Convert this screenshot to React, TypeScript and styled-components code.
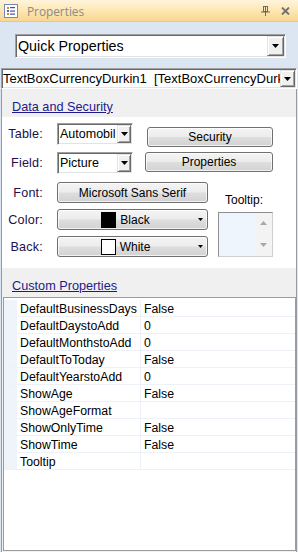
import React from "react";
import styled, { createGlobalStyle } from "styled-components";

const Global = createGlobalStyle`
  html, body { margin: 0; padding: 0; }
  body {
    width: 298px; height: 552px; overflow: hidden;
    font-family: "Liberation Sans", Arial, sans-serif;
    -webkit-font-smoothing: none;
  }
  * { box-sizing: border-box; }
`;

const Window = styled.div`
  width: 298px;
  height: 552px;
  display: flex;
  flex-direction: column;
  background: #dce6f2;
`;

const TitleBar = styled.div`
  height: 22px;
  flex: none;
  display: flex;
  align-items: center;
  padding: 0 8px 0 4px;
  background: linear-gradient(#fff4dc 0%, #fde8b6 45%, #f9d690 100%);
  border-bottom: 1px solid #f1c66f;
`;

const TitleText = styled.span`
  margin-left: 9px;
  font-family: "Open Sans", "Liberation Sans", sans-serif;
  font-size: 11.8px;
  color: #8b8b8b;
  line-height: 14px;
`;

const TitleTools = styled.div`
  margin-left: auto;
  display: flex;
  align-items: center;
  gap: 11px;
`;

const QuickArea = styled.div`
  height: 46px;
  flex: none;
  padding: 12px 0 0 15px;
`;

const SunkenCombo = styled.div<{ $w: string; $h: number; $fs: number }>`
  width: ${(p) => p.$w};
  height: ${(p) => p.$h}px;
  display: flex;
  align-items: stretch;
  background: #fff;
  border: 1px solid;
  border-color: #a0a0a0 #ffffff #ffffff #a0a0a0;
  box-shadow: inset 1px 1px #696969, inset -1px -1px #e3e3e3;
  padding: 1px;
  font-size: ${(p) => p.$fs}px;
  color: #000;
`;

const ComboText = styled.span<{ $pad: number }>`
  flex: 1;
  min-width: 0;
  overflow: hidden;
  white-space: pre;
  display: flex;
  align-items: center;
  padding-left: ${(p) => p.$pad}px;
`;

const DropButton = styled.span<{ $w: number }>`
  flex: none;
  width: ${(p) => p.$w}px;
  display: flex;
  align-items: center;
  justify-content: center;
  background: #f0f0f0;
  border: 1px solid;
  border-color: #e3e3e3 #696969 #696969 #e3e3e3;
  box-shadow: inset 1px 1px #ffffff, inset -1px -1px #a0a0a0;
`;

const ObjectBar = styled.div`
  flex: none;
  height: 21px;
  margin: 0 1px;
  display: flex;
`;

const Panel = styled.div`
  flex: 1;
  margin: 0 1px;
  display: flex;
  flex-direction: column;
  background: #f0f0f0;
  border-left: 1px solid #9a9a9a;
  border-right: 1px solid #9a9a9a;
`;

const SectionHeader = styled.div<{ $h: number }>`
  flex: none;
  height: ${(p) => p.$h}px;
  padding: 8px 0 0 10px;
`;

const HeaderLink = styled.span`
  font-size: 12.7px;
  line-height: 16px;
  color: #1d1a8c;
  text-decoration: underline;
`;

const DataBody = styled.div`
  flex: none;
  height: 151px;
  background: #fff;
  padding: 0 23px 11px 0;
  display: flex;
  flex-direction: column;
`;

const TopBlock = styled.div`
  display: flex;
  justify-content: space-between;
  align-items: flex-start;
`;

const FieldCol = styled.div<{ $top: number; $gap: number }>`
  display: flex;
  flex-direction: column;
  padding-top: ${(p) => p.$top}px;
  gap: ${(p) => p.$gap}px;
`;

const FieldRow = styled.div<{ $h: number }>`
  height: ${(p) => p.$h}px;
  display: flex;
  align-items: center;
`;

const Label = styled.span`
  width: 41px;
  margin-right: 14px;
  text-align: right;
  font-size: 12.6px;
  color: #22104a;
  letter-spacing: 0.2px;
`;

const ActionCol = styled.div`
  display: flex;
  flex-direction: column;
  align-items: flex-end;
  padding-top: 10px;
  gap: 5px;
`;

const PushButton = styled.div<{ $w: number; $h: number }>`
  width: ${(p) => p.$w}px;
  height: ${(p) => p.$h}px;
  display: flex;
  align-items: center;
  border: 1px solid #707070;
  border-radius: 3px;
  background: linear-gradient(#f4f4f4 0%, #ececec 48%, #dedede 52%, #d2d2d2 100%);
  box-shadow: inset 0 0 0 1px rgba(255, 255, 255, 0.7);
  font-size: 12px;
  color: #000;
`;

const ButtonLabel = styled.span`
  flex: 1;
  display: flex;
  align-items: center;
  justify-content: center;
  gap: 4px;
  line-height: 14px;
`;

const ArrowSlot = styled.span`
  flex: none;
  width: 14px;
  display: flex;
  align-items: center;
  justify-content: center;
`;

const Swatch = styled.span<{ $c: string }>`
  width: 15px;
  height: 16px;
  background: ${(p) => p.$c};
  border: 1px solid #000;
`;

const BottomBlock = styled.div`
  display: flex;
  align-items: flex-start;
  padding-top: 8px;
`;

const TooltipCol = styled.div`
  margin-left: 10px;
  width: 59px;
  padding-top: 11px;
  display: flex;
  flex-direction: column;
`;

const TooltipLabel = styled.span`
  padding-left: 7px;
  margin-bottom: 5px;
  font-size: 12px;
  line-height: 14px;
  color: #000;
`;

const TooltipBox = styled.div`
  height: 45px;
  display: flex;
  background: #eef5fd;
  border: 1px solid;
  border-color: #8e8f8f #cfcfcf #cfcfcf #8e8f8f;
`;

const TooltipArea = styled.div`
  flex: 1;
`;

const ScrollTrack = styled.div`
  width: 17px;
  background: #f3f3f3;
  display: flex;
  flex-direction: column;
  justify-content: space-between;
  align-items: center;
  padding: 8px 0 9px;
`;

const PropGrid = styled.div`
  flex: 1;
  margin: 0 0 1px 1px;
  background: #fff;
  border: 1px solid #9c9c9c;
  padding-top: 2px;
  display: flex;
  flex-direction: column;
`;

const PropRow = styled.div`
  height: 17px;
  flex: none;
  display: grid;
  grid-template-columns: 13px 124px 1fr;
  border-bottom: 1px solid #eef1f7;
  font-size: 12.3px;
  color: #000;
`;

const Gutter = styled.span`
  background: #eff3fa;
`;

const NameCell = styled.span`
  padding: 1px 0 0 3px;
  border-right: 1px solid #eef1f7;
  display: flex;
  align-items: center;
  white-space: nowrap;
  overflow: hidden;
`;

const ValueCell = styled.span`
  padding: 1px 0 0 3px;
  display: flex;
  align-items: center;
`;

const ComboArrow = () => (
  <svg width="7" height="4" viewBox="0 0 7 4">
    <polygon points="0,0 7,0 3.5,4" fill="#000" />
  </svg>
);

const SmallArrow = () => (
  <svg width="5" height="3" viewBox="0 0 5 3">
    <polygon points="0,0 5,0 2.5,3" fill="#000" />
  </svg>
);

const ScrollArrow = ({ up }: { up?: boolean }) => (
  <svg width="7" height="4" viewBox="0 0 7 4">
    <polygon points={up ? "0,4 7,4 3.5,0" : "0,0 7,0 3.5,4"} fill="#a8a8a8" />
  </svg>
);

const PropsIcon = () => (
  <svg width="14" height="14" viewBox="0 0 14 14">
    <rect x="0.5" y="0.5" width="13" height="13" fill="#fff" stroke="#7588b8" />
    <rect x="3" y="3" width="2" height="2" fill="#d88a2a" />
    <rect x="3" y="6" width="2" height="2" fill="#4a68b0" />
    <rect x="3" y="9" width="2" height="2" fill="#d88a2a" />
    <rect x="6" y="3" width="5" height="1.2" fill="#3a56a8" />
    <rect x="6" y="6.5" width="5" height="1.2" fill="#3a56a8" />
    <rect x="6" y="9.5" width="5" height="1.2" fill="#3a56a8" />
  </svg>
);

const PinIcon = () => (
  <svg width="9" height="10" viewBox="0 0 9 10">
    <rect x="2.5" y="0.5" width="4" height="5" fill="none" stroke="#6a6a6a" />
    <line x1="4.5" y1="1" x2="4.5" y2="5" stroke="#6a6a6a" />
    <line x1="0" y1="6" x2="9" y2="6" stroke="#6a6a6a" />
    <line x1="4.5" y1="6" x2="4.5" y2="10" stroke="#6a6a6a" />
  </svg>
);

const CloseIcon = () => (
  <svg width="9" height="8" viewBox="0 0 9 8">
    <path d="M1 0.5 L8 7.5 M8 0.5 L1 7.5" stroke="#707070" strokeWidth="1.8" />
  </svg>
);

const props: [string, string][] = [
  ["DefaultBusinessDays", "False"],
  ["DefaultDaystoAdd", "0"],
  ["DefaultMonthstoAdd", "0"],
  ["DefaultToToday", "False"],
  ["DefaultYearstoAdd", "0"],
  ["ShowAge", "False"],
  ["ShowAgeFormat", ""],
  ["ShowOnlyTime", "False"],
  ["ShowTime", "False"],
  ["Tooltip", ""],
];

export default function App() {
  return (
    <>
      <Global />
      <Window>
        <TitleBar>
          <PropsIcon />
          <TitleText>Properties</TitleText>
          <TitleTools>
            <PinIcon />
            <CloseIcon />
          </TitleTools>
        </TitleBar>

        <QuickArea>
          <SunkenCombo $w="271px" $h={24} $fs={14.3}>
            <ComboText $pad={1}>Quick Properties</ComboText>
            <DropButton $w={17}>
              <ComboArrow />
            </DropButton>
          </SunkenCombo>
        </QuickArea>

        <ObjectBar>
          <SunkenCombo $w="100%" $h={21} $fs={13}>
            <ComboText $pad={0}>TextBoxCurrencyDurkin1  [TextBoxCurrencyDurkin1]</ComboText>
            <DropButton $w={15}>
              <ComboArrow />
            </DropButton>
          </SunkenCombo>
        </ObjectBar>

        <Panel>
          <SectionHeader $h={28}>
            <HeaderLink>Data and Security</HeaderLink>
          </SectionHeader>

          <DataBody>
            <TopBlock>
              <FieldCol $top={6} $gap={7}>
                <FieldRow $h={22}>
                  <Label>Table:</Label>
                  <SunkenCombo $w="76px" $h={22} $fs={12.5}>
                    <ComboText $pad={1}>Automobil</ComboText>
                    <DropButton $w={14}>
                      <ComboArrow />
                    </DropButton>
                  </SunkenCombo>
                </FieldRow>
                <FieldRow $h={22}>
                  <Label>Field:</Label>
                  <SunkenCombo $w="76px" $h={22} $fs={12.5}>
                    <ComboText $pad={1}>Picture</ComboText>
                    <DropButton $w={14}>
                      <ComboArrow />
                    </DropButton>
                  </SunkenCombo>
                </FieldRow>
              </FieldCol>
              <ActionCol>
                <PushButton $w={126} $h={20}>
                  <ButtonLabel>Security</ButtonLabel>
                </PushButton>
                <PushButton $w={128} $h={20}>
                  <ButtonLabel>Properties</ButtonLabel>
                </PushButton>
              </ActionCol>
            </TopBlock>

            <BottomBlock>
              <FieldCol $top={0} $gap={6}>
                <FieldRow $h={21}>
                  <Label>Font:</Label>
                  <PushButton $w={151} $h={21}>
                    <ButtonLabel>Microsoft Sans Serif</ButtonLabel>
                  </PushButton>
                </FieldRow>
                <FieldRow $h={21}>
                  <Label>Color:</Label>
                  <PushButton $w={151} $h={21}>
                    <ButtonLabel>
                      <Swatch $c="#000" />
                      Black
                    </ButtonLabel>
                    <ArrowSlot>
                      <SmallArrow />
                    </ArrowSlot>
                  </PushButton>
                </FieldRow>
                <FieldRow $h={21}>
                  <Label>Back:</Label>
                  <PushButton $w={151} $h={21}>
                    <ButtonLabel>
                      <Swatch $c="#fff" />
                      White
                    </ButtonLabel>
                    <ArrowSlot>
                      <SmallArrow />
                    </ArrowSlot>
                  </PushButton>
                </FieldRow>
              </FieldCol>
              <TooltipCol>
                <TooltipLabel>Tooltip:</TooltipLabel>
                <TooltipBox>
                  <TooltipArea />
                  <ScrollTrack>
                    <ScrollArrow up />
                    <ScrollArrow />
                  </ScrollTrack>
                </TooltipBox>
              </TooltipCol>
            </BottomBlock>
          </DataBody>

          <SectionHeader $h={29}>
            <HeaderLink>Custom Properties</HeaderLink>
          </SectionHeader>

          <PropGrid>
            {props.map(([name, value]) => (
              <PropRow key={name}>
                <Gutter />
                <NameCell>{name}</NameCell>
                <ValueCell>{value}</ValueCell>
              </PropRow>
            ))}
          </PropGrid>
        </Panel>
      </Window>
    </>
  );
}
